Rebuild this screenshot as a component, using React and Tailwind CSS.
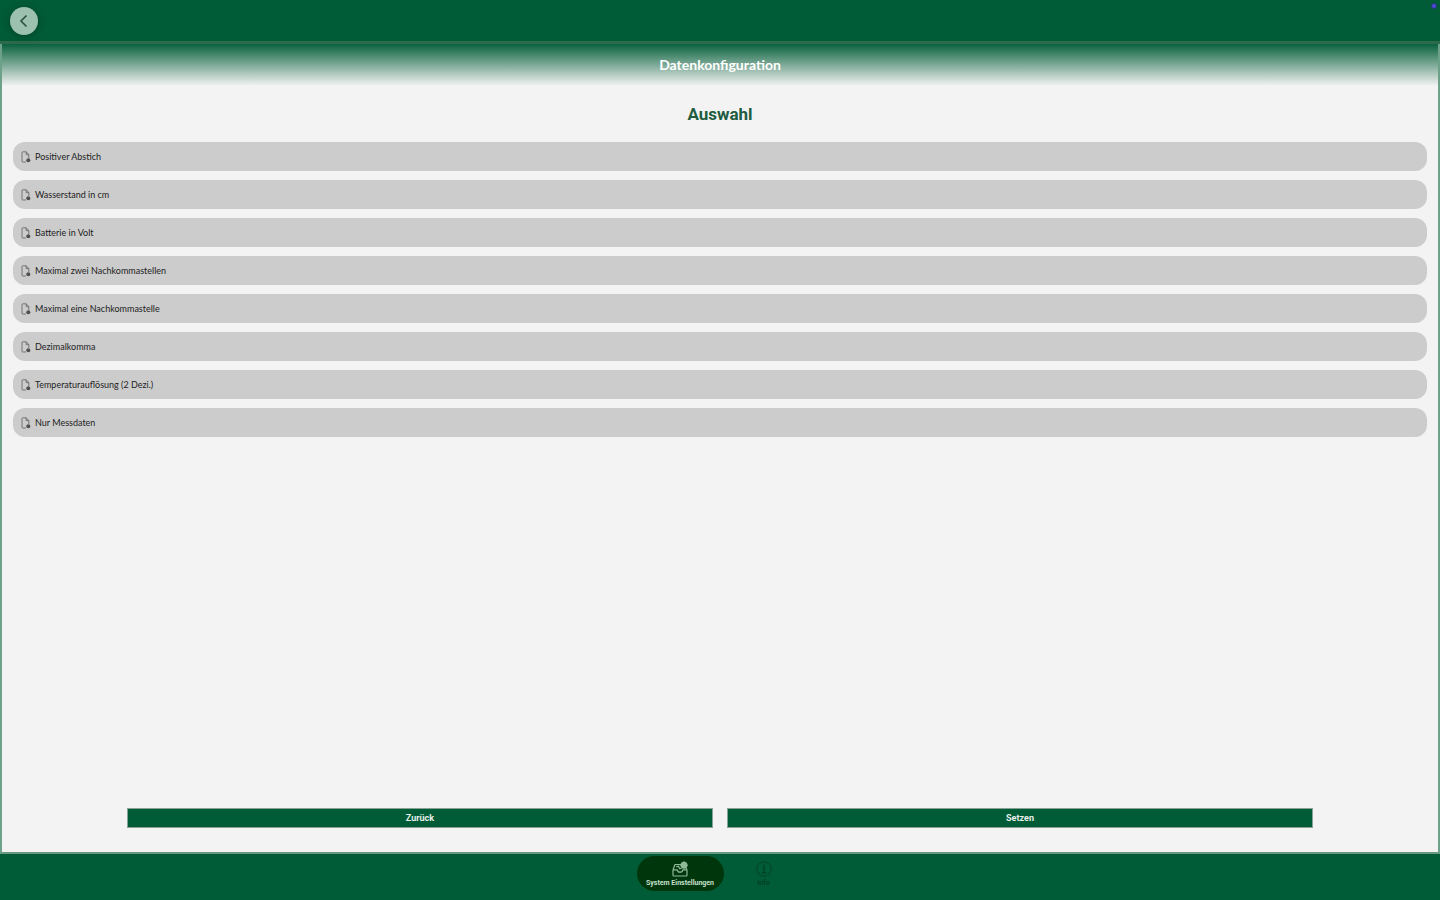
import { useState } from 'react';

const options = [
  'Positiver Abstich',
  'Wasserstand in cm',
  'Batterie in Volt',
  'Maximal zwei Nachkommastellen',
  'Maximal eine Nachkommastelle',
  'Dezimalkomma',
  'Temperaturauflösung (2 Dezi.)',
  'Nur Messdaten',
];

function FileIcon() {
  return (
    <svg viewBox="0 0 10 12" className="w-[10px] h-3 shrink-0" fill="none" stroke="#606060" strokeWidth="0.8" aria-hidden="true">
      <path d="M5 11H1.7a.7.7 0 0 1-.7-.7V1.5a.7.7 0 0 1 .7-.7h3.5L7.8 3.6V7" />
      <path d="M5.2.8v2.9h2.6" />
      <circle cx="7.3" cy="9.3" r="2" fill="#505050" stroke="none" />
    </svg>
  );
}

function TrayIcon() {
  return (
    <svg viewBox="0 0 16 16" className="w-4 h-4" fill="none" stroke="currentColor" strokeWidth="1.2" strokeLinejoin="round" aria-hidden="true">
      <path d="M1 8.8 3 3.5h6M1 8.8V14a1 1 0 0 0 1 1h12a1 1 0 0 0 1-1V8.8M1 8.8h4.2c.3 1.6 1.3 2.4 2.8 2.4s2.5-.8 2.8-2.4H15" />
      <path d="m4.2 6 2.1-1 1.4 2.6 2-.4M15 8.8l-1-2.3" />
      <circle cx="12" cy="4.2" r="3.4" fill="currentColor" stroke="none" />
      <path d="M12 0v8.4M7.8 4.2h8.4" strokeWidth="0.8" />
    </svg>
  );
}

function InfoIcon() {
  return (
    <svg viewBox="0 0 16 16" className="w-4 h-4" fill="none" stroke="currentColor" strokeWidth="0.9" aria-hidden="true">
      <circle cx="8" cy="8" r="7.2" />
      <path d="M6.3 6.7h1.8v5M6 11.8h4.2" strokeWidth="1.2" />
      <circle cx="8" cy="4.3" r="0.9" fill="currentColor" stroke="none" />
    </svg>
  );
}

export default function App() {
  const [selected, setSelected] = useState([]);

  const toggle = (option) => {
    setSelected((prev) =>
      prev.includes(option) ? prev.filter((o) => o !== option) : [...prev, option]
    );
  };

  return (
    <div className="min-h-screen flex flex-col bg-[#005c37] font-['Roboto',sans-serif]">
      <header className="relative h-[41px] px-[10px] flex items-center">
        <button
          type="button"
          aria-label="Zurück"
          className="w-7 h-7 rounded-full bg-[#9cc1ae] text-[#2f4f3f] flex items-center justify-center shadow-[0_1px_8px_rgba(0,40,20,0.5)]"
        >
          <svg viewBox="0 0 14 14" className="w-[14px] h-[14px]" fill="none" stroke="currentColor" strokeWidth="1.6" aria-hidden="true">
            <path d="M9.5 1.5 4 7l5.5 5.5" />
          </svg>
        </button>
        <span className="absolute top-1 right-1 w-1 h-1 rounded-full bg-[#4c48d8] ring-1 ring-[#293a72]" />
      </header>

      <div className="h-[3px] bg-[#2d6a4c]" />
      <main className="flex-1 flex flex-col bg-[#f3f3f3] border-x-2 border-x-[#6da189] border-b-2 border-b-[#669982]">
        <div className="h-[42px] flex items-center justify-center bg-linear-to-b/srgb from-[#0a623e] to-[#f3f3f3]">
          <h1 className="text-[14px] leading-5 font-bold text-white font-['Lato',sans-serif]">Datenkonfiguration</h1>
        </div>
        <h2 className="mt-4 text-center text-[17px] leading-6 font-bold text-[#205c3f]">Auswahl</h2>

        <ul className="mt-4 px-[11px] flex flex-col gap-[9px] font-['Lato',sans-serif]">
          {options.map((option) => (
            <li key={option}>
              <button
                type="button"
                aria-pressed={selected.includes(option)}
                onClick={() => toggle(option)}
                className="w-full h-[29px] px-2 flex items-center gap-1 rounded-xl bg-[#cccccc] text-left text-[9px] leading-3 text-[#222222]"
              >
                <FileIcon />
                {option}
              </button>
            </li>
          ))}
        </ul>

        <div className="mt-auto mb-6 px-[125px] grid grid-cols-2 gap-[14px]">
          <button type="button" className="h-5 border border-[#86a294] bg-[#005c37] text-[9px] leading-3 font-bold text-[#e6efea]">
            Zurück
          </button>
          <button type="button" className="h-5 border border-[#86a294] bg-[#005c37] text-[9px] leading-3 font-bold text-[#e6efea]">
            Setzen
          </button>
        </div>
      </main>

      <nav className="h-[46px] pt-[2px] flex items-start justify-center text-[7px] leading-2 font-bold">
        <a href="#system" className="w-[87px] h-[35px] rounded-full bg-[#00360b] text-[#8fba97] flex flex-col items-center justify-center">
          <TrayIcon />
          <span className="mt-[2px] text-[#c8e0cc]">System Einstellungen</span>
        </a>
        <a href="#info" className="w-20 h-[35px] text-[#003f22] flex flex-col items-center justify-center">
          <InfoIcon />
          <span className="mt-[2px]">Info</span>
        </a>
      </nav>
    </div>
  );
}
